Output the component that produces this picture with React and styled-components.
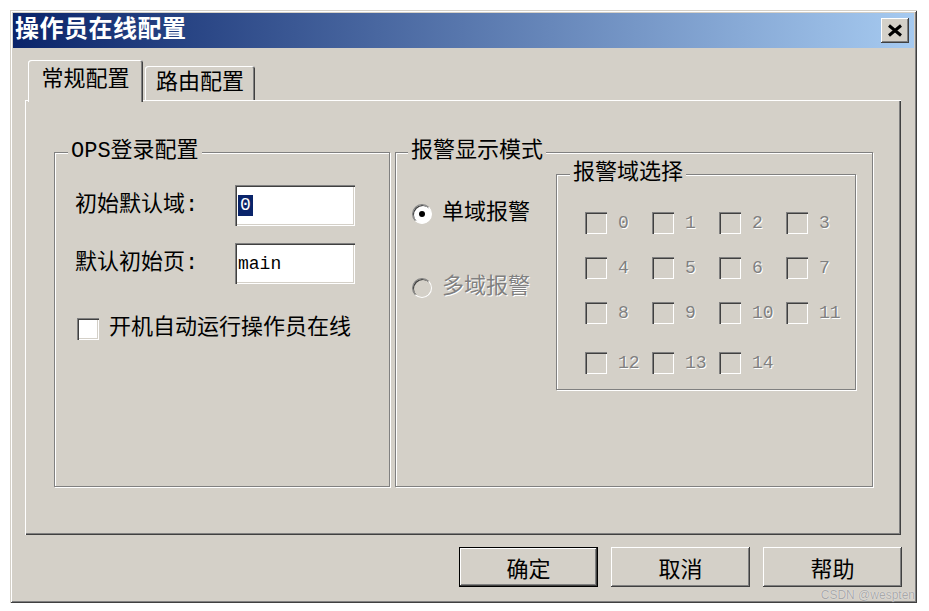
import React from 'react';
import styled, { createGlobalStyle } from 'styled-components';

const FACE = '#D4D0C8';
const FONT = '"Liberation Mono", "Noto Sans CJK SC", monospace';

const GlobalStyle = createGlobalStyle`
  html, body {
    margin: 0;
    padding: 0;
    background: #fff;
  }
  body {
    font-family: ${FONT};
    color: #000;
  }
`;

const Screen = styled.div`
  position: relative;
  width: 929px;
  height: 611px;
  box-sizing: border-box;
  padding: 10px 0 0 10px;
`;

const Window = styled.div`
  width: 907px;
  height: 593px;
  box-sizing: border-box;
  padding: 3px;
  background: ${FACE};
  display: flex;
  flex-direction: column;
  box-shadow: inset 1px 1px 0 ${FACE}, inset -1px -1px 0 #404040,
    inset 2px 2px 0 #fff, inset -2px -2px 0 #808080;
`;

const TitleBar = styled.div`
  height: 35px;
  display: flex;
  align-items: center;
  justify-content: space-between;
  padding-left: 2px;
  background: linear-gradient(to right, #0a246a, #a6caf0);
`;

const Title = styled.span`
  color: #fff;
  font-size: 24px;
  font-weight: 700;
  line-height: 35px;
  letter-spacing: 0.5px;
`;

const CloseButton = styled.div`
  width: 28px;
  height: 25px;
  margin-right: 5px;
  display: flex;
  align-items: center;
  justify-content: center;
  background: ${FACE};
  box-shadow: inset -1px -1px 0 #404040, inset 1px 1px 0 #fff,
    inset -2px -2px 0 #808080, inset 2px 2px 0 ${FACE};
`;

const Body = styled.div`
  flex: 1;
  display: flex;
  flex-direction: column;
  padding: 12px 12px 0 12px;
`;

const TabStrip = styled.div`
  height: 40px;
  display: flex;
  align-items: flex-end;
  gap: 2px;
  padding-left: 3px;
  position: relative;
  z-index: 1;
`;

const Tab = styled.div`
  height: ${(p) => (p.$active ? 42 : 34)}px;
  margin-bottom: ${(p) => (p.$active ? -2 : 0)}px;
  width: ${(p) => p.$width}px;
  box-sizing: border-box;
  display: flex;
  align-items: ${(p) => (p.$active ? 'flex-start' : 'center')};
  justify-content: center;
  padding-top: ${(p) => (p.$active ? 8 : 1)}px;
  font-size: 22px;
  line-height: 26px;
  background: ${FACE};
  border-radius: 3px 3px 0 0;
  box-shadow: inset 1px 1px 0 #fff, inset -1px 0 0 #404040,
    inset -2px 0 0 #808080;
`;

const Panel = styled.div`
  height: 435px;
  margin-right: 1px;
  box-sizing: border-box;
  padding: 52px 0 0 29px;
  display: flex;
  gap: 5px;
  background: ${FACE};
  box-shadow: inset 1px 1px 0 #fff, inset -1px -1px 0 #404040,
    inset -2px -2px 0 #808080;
`;

const GroupBox = styled.div`
  position: relative;
  box-sizing: border-box;
  width: ${(p) => p.$width}px;
  height: ${(p) => p.$height}px;
  border: 1px solid #808080;
  box-shadow: 1px 1px 0 #fff, inset 1px 1px 0 #fff;
`;

const Legend = styled.span`
  position: absolute;
  top: -13px;
  left: ${(p) => p.$left ?? 13}px;
  padding: 0 3px;
  background: ${FACE};
  font-size: 22px;
  line-height: 24px;
  white-space: nowrap;
`;

const LoginGrid = styled.div`
  display: grid;
  grid-template-columns: 160px 120px;
  grid-auto-rows: 41px;
  row-gap: 17px;
  padding: 32px 0 0 20px;
`;

const FieldLabel = styled.div`
  display: flex;
  align-items: center;
  font-size: 22px;
  line-height: 24px;
`;

const TextBox = styled.div`
  display: flex;
  align-items: center;
  padding-left: 3px;
  background: #fff;
  font-size: 18px;
  box-shadow: inset 1px 1px 0 #808080, inset 2px 2px 0 #404040,
    inset -1px -1px 0 #fff, inset -2px -2px 0 ${FACE};
`;

const Selected = styled.span`
  background: #0a246a;
  color: #fff;
  line-height: 21px;
  padding: 0 2px;
`;

const CheckRow = styled.label`
  grid-column: 1 / -1;
  margin: 14px 0 0 2px;
  display: flex;
  align-items: center;
  gap: 10px;
  font-size: 22px;
  line-height: 24px;
`;

const Box = styled.span`
  flex: none;
  width: 22px;
  height: 22px;
  background: ${(p) => (p.$disabled ? FACE : '#fff')};
  box-shadow: inset 1px 1px 0 #808080, inset 2px 2px 0 #404040,
    inset -1px -1px 0 #fff, inset -2px -2px 0 ${FACE};
`;

const AlarmLayout = styled.div`
  display: flex;
  padding: 21px 0 0 16px;
`;

const RadioColumn = styled.div`
  width: 144px;
  display: flex;
  flex-direction: column;
  gap: 54px;
  padding-top: 30px;
`;

const RadioRow = styled.div`
  height: 20px;
  display: flex;
  align-items: center;
  gap: 10px;
  font-size: 22px;
  line-height: 24px;
  white-space: nowrap;
  color: ${(p) => (p.$disabled ? '#808080' : '#000')};
  text-shadow: ${(p) => (p.$disabled ? '1px 1px 0 #fff' : 'none')};
`;

const RadioDot = styled.span`
  flex: none;
  box-sizing: border-box;
  width: 20px;
  height: 20px;
  border-radius: 50%;
  border: 1px solid;
  border-color: #808080 #fff #fff #808080;
  background: ${(p) => (p.$disabled ? FACE : '#fff')};
  box-shadow: inset 1px 1px 0 #404040;
  display: flex;
  align-items: center;
  justify-content: center;

  &::after {
    content: '';
    width: 6px;
    height: 6px;
    border-radius: 50%;
    background: #000;
    display: ${(p) => (p.$checked ? 'block' : 'none')};
  }
`;

const DomainGrid = styled.div`
  display: grid;
  grid-template-columns: repeat(4, 67px);
  grid-template-rows: 45px 45px 50px 22px;
  padding: 37px 0 0 28px;
`;

const DomainItem = styled.div`
  height: 22px;
  display: flex;
  align-items: center;
  gap: 11px;
  font-size: 18px;
  color: #808080;
  text-shadow: 1px 1px 0 #fff;
`;

const ButtonRow = styled.div`
  display: flex;
  justify-content: flex-end;
  gap: 13px;
  padding: 12px 0 0 0;
`;

const Button = styled.div`
  width: 139px;
  height: 40px;
  box-sizing: border-box;
  display: flex;
  align-items: center;
  justify-content: center;
  font-size: 22px;
  background: ${FACE};
  border: ${(p) => (p.$default ? '1px solid #000' : 'none')};
  box-shadow: inset -1px -1px 0 #404040, inset 1px 1px 0 #fff,
    inset -2px -2px 0 #808080, inset 2px 2px 0 ${FACE};
`;

const Watermark = styled.span`
  position: absolute;
  right: 14px;
  bottom: 9px;
  font-family: "Liberation Sans", sans-serif;
  font-size: 12px;
  color: #a8a8a8;
  text-shadow: 0 0 1px #fff;
`;

const CloseGlyph = () => (
  <svg width="16" height="13" viewBox="0 0 16 13">
    <path d="M2 1.5 L14 11.5 M14 1.5 L2 11.5" stroke="#000" strokeWidth="3" fill="none" />
  </svg>
);

const domains = Array.from({ length: 15 }, (_, i) => i);

export default function App() {
  return (
    <Screen>
      <GlobalStyle />
      <Window>
        <TitleBar>
          <Title>操作员在线配置</Title>
          <CloseButton>
            <CloseGlyph />
          </CloseButton>
        </TitleBar>
        <Body>
          <TabStrip>
            <Tab $active $width={115}>常规配置</Tab>
            <Tab $width={110}>路由配置</Tab>
          </TabStrip>
          <Panel>
            <GroupBox $width={336} $height={335}>
              <Legend $left={13}>OPS登录配置</Legend>
              <LoginGrid>
                <FieldLabel>初始默认域:</FieldLabel>
                <TextBox>
                  <Selected>0</Selected>
                </TextBox>
                <FieldLabel>默认初始页:</FieldLabel>
                <TextBox>main</TextBox>
                <CheckRow>
                  <Box />
                  开机自动运行操作员在线
                </CheckRow>
              </LoginGrid>
            </GroupBox>
            <GroupBox $width={478} $height={335}>
              <Legend $left={12}>报警显示模式</Legend>
              <AlarmLayout>
                <RadioColumn>
                  <RadioRow>
                    <RadioDot $checked />
                    单域报警
                  </RadioRow>
                  <RadioRow $disabled>
                    <RadioDot $disabled />
                    多域报警
                  </RadioRow>
                </RadioColumn>
                <GroupBox $width={300} $height={216}>
                  <Legend $left={13}>报警域选择</Legend>
                  <DomainGrid>
                    {domains.map((d) => (
                      <DomainItem key={d}>
                        <Box $disabled />
                        {d}
                      </DomainItem>
                    ))}
                  </DomainGrid>
                </GroupBox>
              </AlarmLayout>
            </GroupBox>
          </Panel>
          <ButtonRow>
            <Button $default>确定</Button>
            <Button>取消</Button>
            <Button>帮助</Button>
          </ButtonRow>
        </Body>
      </Window>
      <Watermark>CSDN @wespten</Watermark>
    </Screen>
  );
}
